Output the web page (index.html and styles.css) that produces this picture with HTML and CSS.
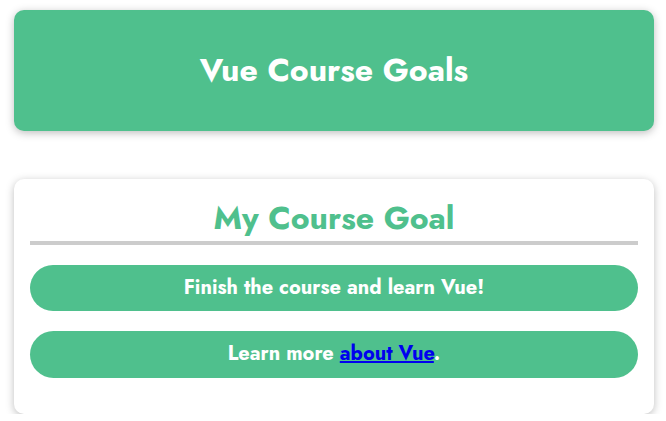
FILE: index.html
```html
<!DOCTYPE html>
<html lang="en">
<head>
<meta charset="utf-8">
<title>Vue Course Goals</title>
<link rel="stylesheet" href="styles.css">
</head>
<body>
<header class="header">
  <h1 class="header-title">Vue Course Goals</h1>
</header>
<section class="goal-card">
  <h2 class="goal-title">My Course Goal</h2>
  <p class="goal-pill">Finish the course and learn Vue!</p>
  <p class="goal-pill">Learn more <a class="goal-link" href="#">about Vue</a>.</p>
</section>
</body>
</html>
```
FILE: styles.css
```css
* { box-sizing: border-box; }
html { font-family: Jost, Lato, "Open Sans", sans-serif; }
body { margin: 0; padding-top: 10px; background: #fff; }

.header,
.goal-card {
  width: 640px;
  margin-left: 14px;
  border-radius: 10px;
  box-shadow: 0 2px 8px rgba(0, 0, 0, 0.26);
  padding: 1rem;
  text-align: center;
}

.header {
  background-color: #4fc08d;
  color: #fff;
}

.header-title {
  margin: 0.67em 0;
  font-size: 2rem;
  font-weight: 700;
}

.goal-card {
  margin-top: 3rem;
  background: #fff;
}

.goal-title {
  margin: 0 0 1rem;
  font-size: 2rem;
  font-weight: 700;
  color: #4fc08d;
  border-bottom: 4px solid #ccc;
}

.goal-pill {
  margin: 1em 0;
  padding: 0.5rem;
  font-size: 1.25rem;
  line-height: 30.6px;
  font-weight: 700;
  color: #fff;
  background-color: #4fc08d;
  border-radius: 25px;
}

.goal-link { color: #0000ee; text-decoration: underline; }
```
